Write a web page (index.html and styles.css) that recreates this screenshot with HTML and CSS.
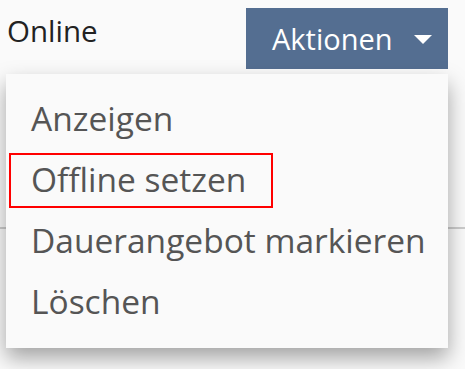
FILE: index.html
```html
<!DOCTYPE html>
<html lang="de">
<head>
    <meta charset="UTF-8">
    <meta name="viewport" content="width=device-width, initial-scale=1.0">
    <title>Aktionen</title>
    <link rel="stylesheet" href="styles.css">
</head>
<body>
    <div class="page">
        <div class="row">
            <span class="status">Online</span>
            <div class="dropdown">
                <button class="btn-actions">Aktionen <span class="caret"></span></button>
                <ul class="menu">
                    <li>Anzeigen</li>
                    <li class="marked">Offline setzen</li>
                    <li>Dauerangebot markieren</li>
                    <li>Löschen</li>
                </ul>
            </div>
        </div>
        <div class="divider"></div>
    </div>
</body>
</html>
```

FILE: styles.css
```css
:root {
    --primary-color: #546e91;
    --text-color: #555;
    --bg-color: #fafafa;
}

* {
    margin: 0;
    padding: 0;
    box-sizing: border-box;
    font-family: 'Open Sans', 'Noto Sans', sans-serif;
}

body {
    background-color: var(--bg-color);
    height: 369px;
    overflow: hidden;
}

.page {
    padding-top: 8px;
}

.row {
    display: flex;
    justify-content: space-between;
    align-items: flex-start;
    padding: 0 17px 0 7px;
}

.status {
    font-size: 29.5px;
    line-height: 46px;
    color: #222;
}

.dropdown {
    position: relative;
}

.btn-actions {
    display: flex;
    align-items: center;
    width: 202px;
    height: 61px;
    padding-left: 26px;
    border: none;
    background-color: var(--primary-color);
    color: white;
    font-size: 29px;
    cursor: pointer;
}

.caret {
    width: 0;
    height: 0;
    margin-left: 21px;
    margin-top: 2px;
    border-left: 9px solid transparent;
    border-right: 9px solid transparent;
    border-top: 9px solid white;
}

.menu {
    position: absolute;
    top: 66px;
    right: 0;
    width: 442px;
    padding: 14px 0 16px;
    list-style: none;
    background: var(--bg-color);
    box-shadow: 0 10px 20px rgba(0, 0, 0, 0.35);
    z-index: 2;
}

.menu li {
    padding-left: 25px;
    font-size: 33.5px;
    line-height: 61px;
    color: var(--text-color);
    white-space: nowrap;
}

.marked {
    position: relative;
}

.marked::after {
    content: '';
    position: absolute;
    left: 3px;
    top: 4px;
    width: 260px;
    height: 51px;
    border: 2px solid #f00;
}

.divider {
    margin-top: 158px;
    border-top: 2px solid #ccc;
}
```
